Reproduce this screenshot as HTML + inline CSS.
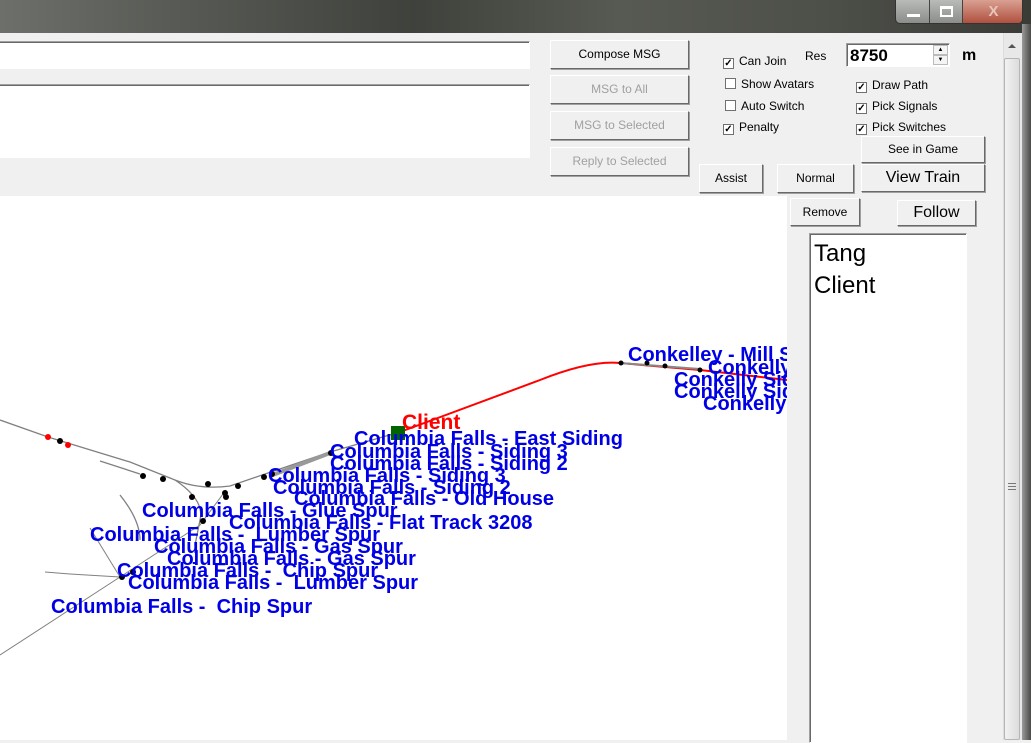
<!DOCTYPE html>
<html><head><meta charset="utf-8"><style>
*{margin:0;padding:0;box-sizing:border-box}
body{width:1031px;height:740px;overflow:hidden;background:#f0f0f0;position:relative;font-family:"Liberation Sans",Arial,sans-serif;font-size:12px}
.a{position:absolute}
.top{left:0;top:0;width:1031px;height:33px;background:linear-gradient(90deg,#6d706a 0%,#5a5d57 15%,#3f413c 40%,#575a52 60%,#4d4f49 80%,#3a3b36 100%)}
.btn{position:absolute;background:#f0f0f0;border:1px solid;border-color:#fff #696969 #696969 #fff;box-shadow:1px 1px 0 #a0a0a0;text-align:center;color:#000;font-size:12px}
.dis{color:#a0a0a0}
.box{position:absolute;background:#fff;border:1px solid;border-color:#a0a0a0 #fff #fff #a0a0a0;box-shadow:inset 1px 1px 0 #696969}
.cb{position:absolute;font-size:12px;color:#000;white-space:nowrap}
.cb i{display:inline-block;width:11px;height:11px;border:1px solid #707070;background:#fff;vertical-align:-1px;margin-right:5px;font-style:normal;font-size:10px;line-height:9px;text-align:center;font-weight:bold}
</style></head><body>
<div class="a top"></div>
<div class="a" style="left:895px;top:0;width:128px;height:24px;border:1px solid #333;border-top:none;border-radius:0 0 5px 5px;overflow:hidden;background:linear-gradient(#b8bbb8,#8a8d8a)">
 <div class="a" style="left:0;top:0;width:34px;height:23px;border-right:1px solid #444"><div class="a" style="left:11px;top:14px;width:13px;height:3px;background:#fff"></div></div>
 <div class="a" style="left:34px;top:0;width:33px;height:23px;border-right:1px solid #444"><div class="a" style="left:10px;top:6px;width:13px;height:11px;border:2px solid #fff;border-top-width:3px"></div></div>
 <div class="a" style="left:67px;top:0;width:61px;height:23px;background:linear-gradient(#d9a092,#b0503e);color:#e9c4bb;font-size:15px;font-weight:bold;text-align:center;line-height:23px">X</div>
</div>
<div class="a" style="left:1022px;top:24px;width:9px;height:716px;background:linear-gradient(90deg,#9a9a9a,#4a4a48)"></div>
<div class="a" style="left:1003px;top:33px;width:19px;height:707px;background:#e8e8e8;border-left:1px solid #ddd"></div>
<div class="a" style="left:1008px;top:44px;width:0;height:0;border-left:4px solid transparent;border-right:4px solid transparent;border-bottom:4px solid #555"></div>
<div class="a" style="left:1004px;top:58px;width:16px;height:682px;background:linear-gradient(90deg,#f2f2f2,#dcdcdc);border:1px solid #b5b5b5;border-radius:2px"></div>
<div class="a" style="left:1008px;top:483px;width:8px;height:7px;border-top:1px solid #777;border-bottom:1px solid #777"><div style="margin-top:2px;border-top:1px solid #777"></div></div>
<div class="box" style="left:-2px;top:41px;width:532px;height:28px"></div>
<div class="box" style="left:-2px;top:84px;width:532px;height:74px"></div>
<div class="btn" style="left:550px;top:40px;width:139px;height:29px;line-height:27px">Compose MSG</div>
<div class="btn dis" style="left:550px;top:75px;width:139px;height:29px;line-height:27px">MSG to All</div>
<div class="btn dis" style="left:550px;top:111px;width:139px;height:29px;line-height:27px">MSG to Selected</div>
<div class="btn dis" style="left:550px;top:147px;width:139px;height:29px;line-height:27px">Reply to Selected</div>
<div class="cb" style="left:723px;top:54px"><i>✓</i>Can Join</div>
<div class="cb" style="left:805px;top:49px">Res</div>
<div class="box" style="left:846px;top:43px;width:104px;height:24px"><span class="a" style="left:3px;top:2px;font-size:17px;font-weight:bold">8750</span>
 <div class="a" style="left:86px;top:1px;width:15px;height:10px;border:1px solid #bbb;background:#f4f4f4;font-size:6px;text-align:center;line-height:8px">▲</div>
 <div class="a" style="left:86px;top:11px;width:15px;height:10px;border:1px solid #bbb;background:#f4f4f4;font-size:6px;text-align:center;line-height:8px">▼</div></div>
<div class="a" style="left:962px;top:47px;font-size:16px;font-weight:bold">m</div>
<div class="cb" style="left:725px;top:77px"><i></i>Show Avatars</div>
<div class="cb" style="left:725px;top:99px"><i></i>Auto Switch</div>
<div class="cb" style="left:723px;top:120px"><i>✓</i>Penalty</div>
<div class="cb" style="left:856px;top:78px"><i>✓</i>Draw Path</div>
<div class="cb" style="left:856px;top:99px"><i>✓</i>Pick Signals</div>
<div class="cb" style="left:856px;top:120px"><i>✓</i>Pick Switches</div>
<div class="btn" style="left:861px;top:136px;width:124px;height:27px;line-height:25px">See in Game</div>
<div class="btn" style="left:699px;top:164px;width:64px;height:29px;line-height:27px">Assist</div>
<div class="btn" style="left:777px;top:164px;width:77px;height:29px;line-height:27px">Normal</div>
<div class="btn" style="left:861px;top:164px;width:124px;height:28px;line-height:26px;font-size:16px">View Train</div>
<div class="a" style="left:0;top:196px;width:787px;height:544px;background:#fff;overflow:hidden">
<svg width="787" height="544" viewBox="0 196 787 544" style="position:absolute;left:0;top:0" font-family="Liberation Sans,Arial,sans-serif" font-weight="bold" font-size="20">
<g fill="none" stroke="#808080" stroke-width="1.3">
<path d="M0 420 L48 437 L130 462 L175 480 Q200 490 230 486 L265 474 L330 452 L400 432"/>
<path d="M100 461 L140 474"/>
<path d="M120 495 Q140 520 140 540"/>
<path d="M175 480 Q205 500 200 520 L195 545"/>
<path d="M226 490 L200 525 L120 577 L0 655" stroke-width="1"/>
<path d="M90 528 L120 577" stroke-width="1"/>
<path d="M45 572 L70 574 L120 577" stroke-width="1"/>
</g>
<path d="M270 476 L330 453" stroke="#999" stroke-width="4"/>
<path d="M400 432 L540 380 Q590 360 620 363 L700 370 L787 380" fill="none" stroke="#f00" stroke-width="2"/>
<path d="M620 363 L700 369" stroke="#888" stroke-width="2"/>
<g fill="#000"><circle cx="60" cy="441" r="3"/><circle cx="143" cy="476" r="3"/><circle cx="163" cy="479" r="3"/><circle cx="208" cy="484" r="3"/><circle cx="238" cy="486" r="3"/><circle cx="225" cy="493" r="3"/><circle cx="226" cy="497" r="3"/><circle cx="192" cy="497" r="3"/><circle cx="264" cy="477" r="3"/><circle cx="272" cy="474" r="3"/><circle cx="203" cy="521" r="3"/><circle cx="133" cy="572" r="3"/><circle cx="122" cy="577" r="3"/><circle cx="331" cy="453" r="3"/><circle cx="621" cy="363" r="2.5"/><circle cx="647" cy="363" r="2.5"/><circle cx="665" cy="366" r="2.5"/><circle cx="700" cy="370" r="2.5"/></g>
<g fill="#f00"><circle cx="48" cy="437" r="3"/><circle cx="68" cy="445" r="3"/></g>
<rect x="391" y="426" width="14" height="14" fill="#006400"/>
<text x="402" y="429" fill="#f00" font-size="21">Client</text>
<g fill="#0000e6">
<text x="628" y="361">Conkelley - Mill Spur</text>
<text x="708" y="374">Conkelly Siding</text>
<text x="674" y="386">Conkelly Siding</text>
<text x="674" y="398">Conkelly Siding</text>
<text x="703" y="410">Conkelly Siding</text>
<text x="354" y="445">Columbia Falls - East Siding</text>
<text x="330" y="458">Columbia Falls - Siding 3</text>
<text x="330" y="470">Columbia Falls - Siding 2</text>
<text x="268" y="482">Columbia Falls - Siding 3</text>
<text x="273" y="494">Columbia Falls - Siding 2</text>
<text x="294" y="505">Columbia Falls - Old House</text>
<text x="142" y="517">Columbia Falls - Glue Spur</text>
<text x="229" y="529">Columbia Falls - Flat Track 3208</text>
<text x="90" y="541" xml:space="preserve">Columbia Falls -  Lumber Spur</text>
<text x="154" y="553">Columbia Falls - Gas Spur</text>
<text x="167" y="565">Columbia Falls - Gas Spur</text>
<text x="117" y="577" xml:space="preserve">Columbia Falls -  Chip Spur</text>
<text x="128" y="589" xml:space="preserve">Columbia Falls -  Lumber Spur</text>
<text x="51" y="613" xml:space="preserve">Columbia Falls -  Chip Spur</text>
</g>
</svg></div>
<div class="btn" style="left:790px;top:198px;width:70px;height:28px;line-height:26px">Remove</div>
<div class="btn" style="left:897px;top:200px;width:79px;height:26px;line-height:24px;font-size:16px">Follow</div>
<div class="box" style="left:809px;top:233px;width:158px;height:510px;padding:4px 0 0 4px;font-size:24px;line-height:32px">Tang<br>Client</div>
</body></html>
